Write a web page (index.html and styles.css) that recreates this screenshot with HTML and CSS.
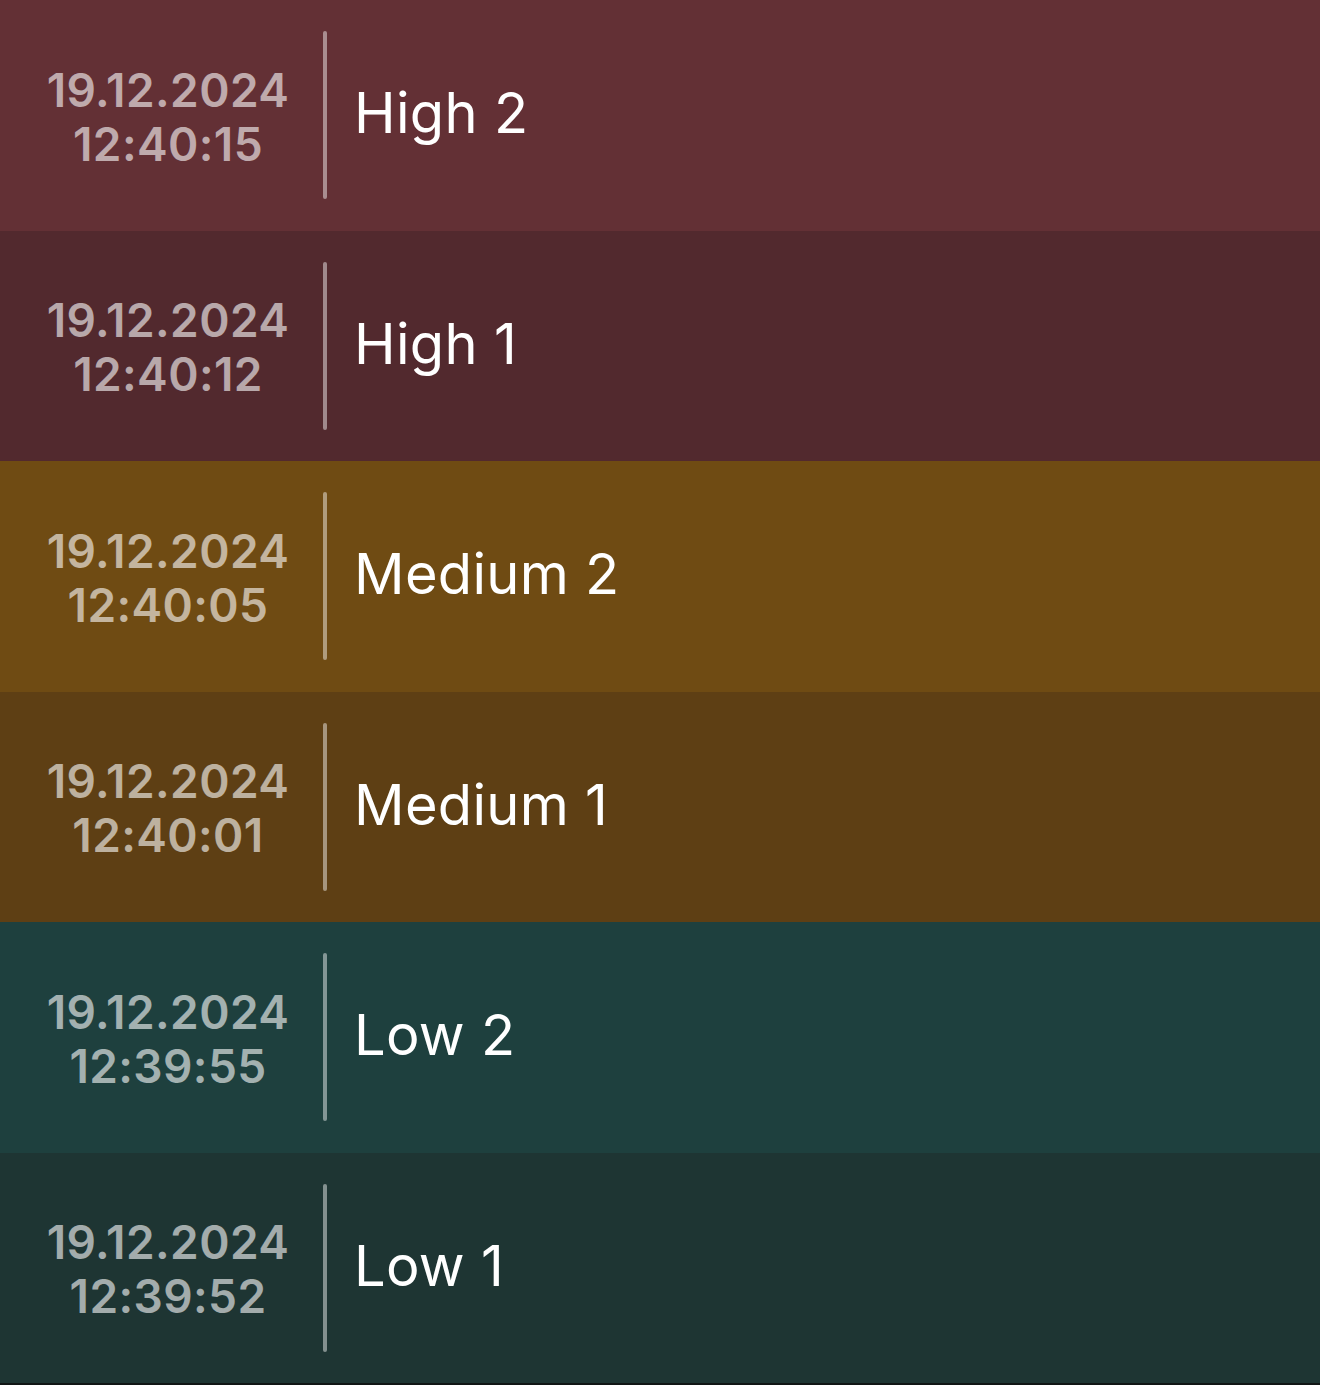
FILE: index.html
```html
<!DOCTYPE html>
<html lang="en">
<head>
<meta charset="utf-8">
<title>Events</title>
<link rel="stylesheet" href="styles.css">
</head>
<body>
<div class="list">
  <div class="row high-2">
    <div class="stamp"><div>19.12.2024</div><div>12:40:15</div></div>
    <div class="divider"></div>
    <div class="title">High 2</div>
  </div>
  <div class="row high-1">
    <div class="stamp"><div>19.12.2024</div><div>12:40:12</div></div>
    <div class="divider"></div>
    <div class="title">High 1</div>
  </div>
  <div class="row medium-2">
    <div class="stamp"><div>19.12.2024</div><div>12:40:05</div></div>
    <div class="divider"></div>
    <div class="title">Medium 2</div>
  </div>
  <div class="row medium-1">
    <div class="stamp"><div>19.12.2024</div><div>12:40:01</div></div>
    <div class="divider"></div>
    <div class="title">Medium 1</div>
  </div>
  <div class="row low-2">
    <div class="stamp"><div>19.12.2024</div><div>12:39:55</div></div>
    <div class="divider"></div>
    <div class="title">Low 2</div>
  </div>
  <div class="row low-1">
    <div class="stamp"><div>19.12.2024</div><div>12:39:52</div></div>
    <div class="divider"></div>
    <div class="title">Low 1</div>
  </div>
</div>
</body>
</html>
```
FILE: styles.css
```css
html, body {
  margin: 0;
  padding: 0;
  background: #111615;
}
body {
  width: 1320px;
  height: 1385px;
  overflow: hidden;
  font-family: Inter, "Noto Sans", sans-serif;
}
.list {
  display: flex;
  flex-direction: column;
  height: 1383px;
}
.row {
  flex: 1;
  display: flex;
  align-items: center;
  padding-left: 46px;
}
.high-2 { background: #633035; }
.high-1 { background: #52292e; }
.medium-2 { background: #6f4b13; }
.medium-1 { background: #5e3f14; }
.low-2 { background: #1e403e; }
.low-1 { background: #1e3533; }
.stamp {
  text-align: center;
  font-size: 46px;
  font-weight: 600;
  line-height: 54px;
  letter-spacing: 0.4px;
  color: rgba(255, 255, 255, 0.6);
  width: 244px;
  margin-top: 3px;
}
.divider {
  width: 4px;
  height: 168px;
  border-radius: 2px;
  background: rgba(255, 255, 255, 0.45);
  margin-left: 33px;
}
.title {
  margin-left: 27px;
  font-size: 56px;
  font-weight: 400;
  letter-spacing: 0.3px;
  color: #ffffff;
  margin-top: -4px;
}
```
